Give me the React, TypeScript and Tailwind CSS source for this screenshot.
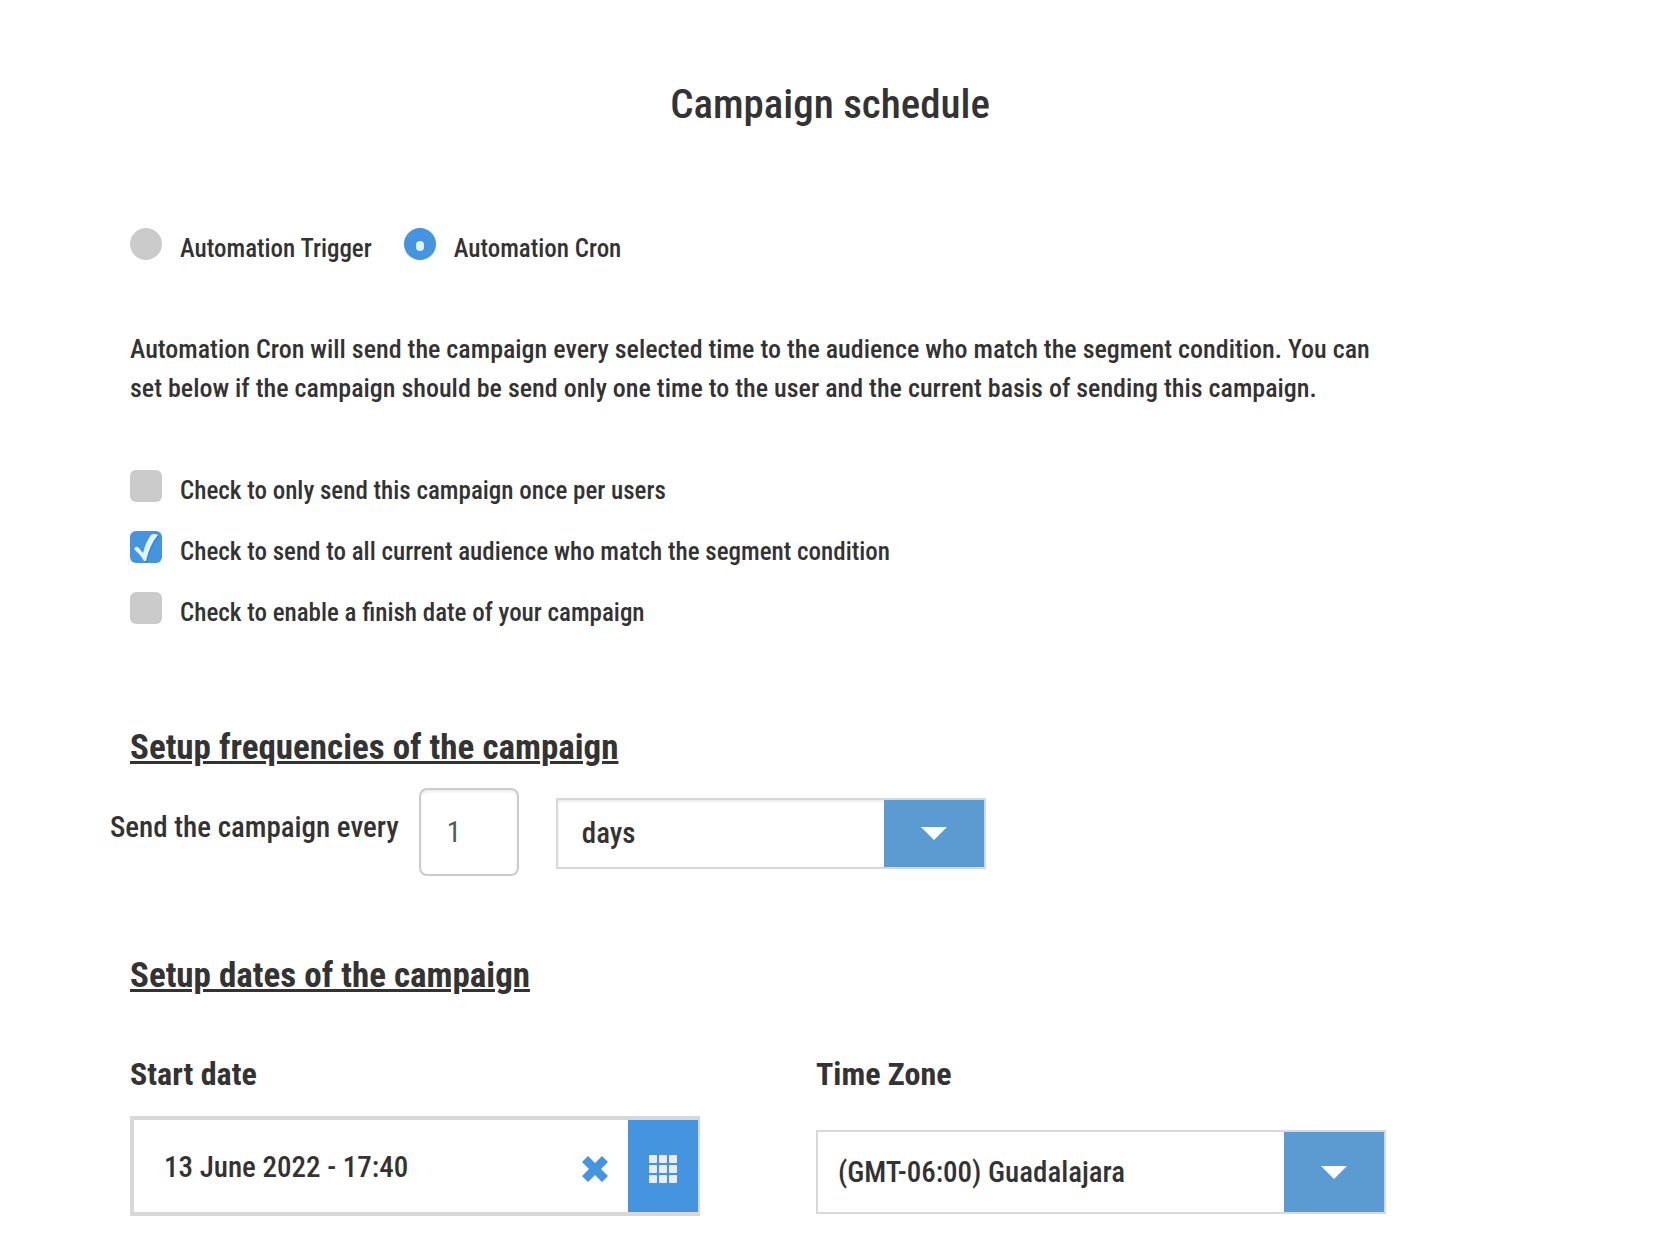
import { useState } from "react";
import type { ReactNode } from "react";

function RadioOption({
  label,
  checked,
  onSelect,
}: {
  label: string;
  checked: boolean;
  onSelect: () => void;
}) {
  return (
    <label className="flex cursor-pointer gap-[18px]">
      <span className="relative h-8 w-8">
        <input
          type="radio"
          name="automation"
          checked={checked}
          onChange={onSelect}
          className="block h-8 w-8 appearance-none rounded-full bg-[#cbcbcb] checked:bg-[#4494e0]"
        />
        {checked && (
          <span className="pointer-events-none absolute top-[13px] left-3 h-[10px] w-2 rounded-[4px] bg-[#def3fb]" />
        )}
      </span>
      <span className="pt-1 text-[25px] leading-[34px]">{label}</span>
    </label>
  );
}

function CheckOption({
  label,
  defaultChecked = false,
}: {
  label: string;
  defaultChecked?: boolean;
}) {
  const [checked, setChecked] = useState(defaultChecked);

  return (
    <label className="flex cursor-pointer gap-[18px]">
      <span className="relative h-8 w-8">
        <input
          type="checkbox"
          checked={checked}
          onChange={(e) => setChecked(e.target.checked)}
          className="block h-8 w-8 appearance-none rounded-md bg-[#cbcbcb] checked:bg-[#4494e0]"
        />
        {checked && (
          <svg
            viewBox="0 0 32 32"
            className="pointer-events-none absolute inset-0 h-8 w-8"
          >
            <path
              d="M6 18Q8 15 11 18L15 24Q19 10 25 5Q27 4 29 5Q21 14 17 31H15Q12 24 6 18Z"
              fill="#2f74b5"
              opacity="0.6"
            />
            <path
              d="M4 18Q6 14 9 17L13 22Q16 10 21 4Q24 2 28 4Q20 13 16 30H14Q10 23 4 18Z"
              fill="#def3fb"
            />
          </svg>
        )}
      </span>
      <span className="pt-1 text-[25px] leading-[34px]">{label}</span>
    </label>
  );
}

function SelectBox({
  id,
  label,
  className,
  children,
}: {
  id: string;
  label?: string;
  className: string;
  children: ReactNode;
}) {
  return (
    <div className="relative border-2 border-[#d8d8d8]">
      <select
        id={id}
        aria-label={label}
        className={`block w-full appearance-none bg-white text-[29px] leading-9 outline-none ${className}`}
      >
        {children}
      </select>
      <span className="pointer-events-none absolute inset-y-0 right-0 flex w-[100px] items-center justify-center bg-[#5b9bd2]">
        <svg viewBox="0 0 26 13" className="h-[13px] w-[26px]">
          <path d="M0 0H26L13 13Z" fill="#fff" />
        </svg>
      </span>
    </div>
  );
}

function GridIcon() {
  const cells = [0, 1, 2];
  return (
    <svg viewBox="0 0 28 28" className="h-7 w-7" fill="#ececec">
      {cells.map((row) =>
        cells.map((col) => (
          <rect
            key={`${row}-${col}`}
            x={col * 10}
            y={row * 10}
            width="8"
            height="8"
            rx="1"
          />
        )),
      )}
    </svg>
  );
}

function App() {
  const [mode, setMode] = useState("cron");
  const [every, setEvery] = useState("1");
  const [startDate, setStartDate] = useState("13 June 2022 - 17:40");

  return (
    <main className="bg-white pt-[78px] pb-7 font-['Roboto_Condensed','Roboto',sans-serif] font-medium text-[#333]">
      <h1 className="pr-1 text-center text-[41px] leading-[52px]">
        Campaign schedule
      </h1>

      <div className="mx-[130px] mt-[98px] max-w-[1256px]">
        <div className="flex gap-8">
          <RadioOption
            label="Automation Trigger"
            checked={mode === "trigger"}
            onSelect={() => setMode("trigger")}
          />
          <RadioOption
            label="Automation Cron"
            checked={mode === "cron"}
            onSelect={() => setMode("cron")}
          />
        </div>

        <p className="mt-16 text-[26px] leading-[39px]">
          Automation Cron will send the campaign every selected time to the
          audience who match the segment condition. You can set below if the
          campaign should be send only one time to the user and the current
          basis of sending this campaign.
        </p>

        <div className="mt-[62px] flex flex-col gap-[23px]">
          <CheckOption label="Check to only send this campaign once per users" />
          <CheckOption
            label="Check to send to all current audience who match the segment condition"
            defaultChecked
          />
          <CheckOption label="Check to enable a finish date of your campaign" />
        </div>

        <h2 className="mt-[98px] text-[35px] leading-10 font-bold underline decoration-[3px]">
          Setup frequencies of the campaign
        </h2>
        <div className="mt-5 -ml-5 flex items-center">
          <label htmlFor="every" className="pb-[10px] text-[29px] leading-9">
            Send the campaign every
          </label>
          <input
            id="every"
            type="text"
            value={every}
            onChange={(e) => setEvery(e.target.value)}
            className="ml-5 h-[88px] w-[100px] rounded-lg border-2 border-[#ccc] px-[26px] text-[29px] font-normal text-[#555] shadow-[inset_0_2px_3px_rgba(0,0,0,0.08)] outline-none"
          />
          <div className="ml-[37px] w-[430px] pt-0.5">
            <SelectBox
              id="unit"
              label="Frequency unit"
              className="h-[67px] px-6 shadow-[inset_0_2px_3px_rgba(0,0,0,0.08)]"
            >
              <option>days</option>
              <option>weeks</option>
              <option>months</option>
            </SelectBox>
          </div>
        </div>

        <h2 className="mt-20 text-[35px] leading-10 font-bold underline decoration-[3px]">
          Setup dates of the campaign
        </h2>
        <div className="mt-[58px] grid grid-cols-2 gap-x-[116px]">
          <div>
            <label
              htmlFor="start"
              className="block text-[32px] leading-10 font-bold"
            >
              Start date
            </label>
            <div className="mt-[22px] flex h-[100px] border-4 border-r-2 border-[#d8d8d8]">
              <input
                id="start"
                type="text"
                value={startDate}
                onChange={(e) => setStartDate(e.target.value)}
                className="min-w-0 flex-1 pt-1 pl-[30px] text-[29px] outline-none"
              />
              <button
                type="button"
                aria-label="Clear date"
                onClick={() => setStartDate("")}
                className="px-5 pt-1.5"
              >
                <svg viewBox="0 0 26 26" className="h-[26px] w-[26px]">
                  <path
                    d="M6 0L13 7L20 0L26 6L19 13L26 20L20 26L13 19L6 26L0 20L7 13L0 6Z"
                    fill="#4494e0"
                  />
                </svg>
              </button>
              <button
                type="button"
                aria-label="Open calendar"
                className="flex w-[70px] items-center justify-center bg-[#4494e0] pt-1.5"
              >
                <GridIcon />
              </button>
            </div>
          </div>
          <div>
            <label
              htmlFor="zone"
              className="mb-9 block text-[32px] leading-10 font-bold"
            >
              Time Zone
            </label>
            <SelectBox id="zone" className="h-20 px-5">
              <option>(GMT-06:00) Guadalajara</option>
              <option>(GMT-05:00) Lima</option>
            </SelectBox>
          </div>
        </div>
      </div>
    </main>
  );
}

export default App;
